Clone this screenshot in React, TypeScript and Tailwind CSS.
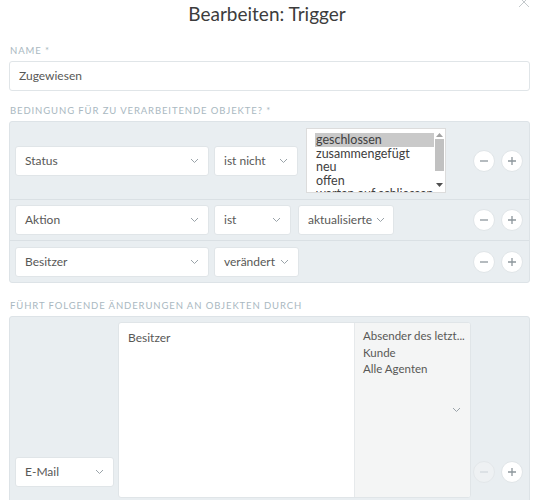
import type { ReactNode } from "react";

const FONT = "font-['Lato','Open_Sans',sans-serif]";

function Chevron({ className = "" }: { className?: string }) {
  return (
    <svg className={className} width="9" height="6" viewBox="0 0 9 6" fill="none">
      <path d="M1 1l3.5 3.5L8 1" stroke="#9aa3a9" strokeWidth="1" />
    </svg>
  );
}

function Label({ children }: { children: ReactNode }) {
  return (
    <div className="text-[9.5px] leading-[12px] tracking-[0.9px] uppercase text-[#a9b8c1]">
      {children}
    </div>
  );
}

function Select({ label, width }: { label: string; width: string }) {
  return (
    <div className={`${width} h-[30px] shrink-0 flex items-center justify-between pl-[9px] pr-[9px] bg-white border border-[#e0e5e8] rounded-[3px]`}>
      <span className="text-[12px] text-[#585856] whitespace-nowrap">{label}</span>
      <Chevron className="shrink-0 ml-[4px]" />
    </div>
  );
}

function RoundButton({ children, disabled = false }: { children: ReactNode; disabled?: boolean }) {
  return (
    <div
      className={
        disabled
          ? "w-[22px] h-[22px] rounded-full border border-[#e3e7ea] bg-[#eef1f3] flex items-center justify-center"
          : "w-[22px] h-[22px] rounded-full border border-[#e0e5e8] bg-white flex items-center justify-center"
      }
    >
      {children}
    </div>
  );
}

function Controls({ disabledMinus = false }: { disabledMinus?: boolean }) {
  const color = disabledMinus ? "#d3d9dd" : "#8d969c";
  return (
    <div className="ml-auto flex gap-[6px] shrink-0">
      <RoundButton disabled={disabledMinus}>
        <svg width="10" height="10" viewBox="0 0 10 10">
          <path d="M1 5h8" stroke={color} strokeWidth="1.3" />
        </svg>
      </RoundButton>
      <RoundButton>
        <svg width="10" height="10" viewBox="0 0 10 10">
          <path d="M1 5h8M5 1v8" stroke="#8d969c" strokeWidth="1.3" />
        </svg>
      </RoundButton>
    </div>
  );
}

function StateList() {
  const items = ["geschlossen", "zusammengefügt", "neu", "offen", "warten auf schliessen"];
  return (
    <div className="ml-[8px] w-[140px] h-[65px] bg-white border border-[#dcdcdc] flex overflow-hidden">
      <div className="flex-1 pl-[8px] pt-[4px] overflow-hidden">
        {items.map((item, index) => (
          <div
            className={
              index === 0
                ? "h-[13.5px] leading-[13.5px] text-[12.5px] text-[#404040] bg-[#c9c9c9] whitespace-nowrap pl-[1px]"
                : "h-[13.5px] leading-[13.5px] text-[12.5px] text-[#404040] whitespace-nowrap pl-[1px]"
            }
            key={item}
          >
            {item}
          </div>
        ))}
      </div>
      <div className="w-[11px] flex flex-col items-center bg-white">
        <svg className="mt-[3px]" width="7" height="5" viewBox="0 0 7 5">
          <path d="M0 5L3.5 1 7 5z" fill="#a3a3a3" />
        </svg>
        <div className="mt-[2px] w-[9px] h-[32px] bg-[#c1c1c1]" />
        <svg className="mt-auto mb-[4px]" width="7" height="5" viewBox="0 0 7 5">
          <path d="M0 0L3.5 4 7 0z" fill="#505050" />
        </svg>
      </div>
    </div>
  );
}

export default function App() {
  return (
    <div className={`${FONT} relative w-[534px] h-[500px] overflow-hidden bg-white text-[#585856]`}>
      <div className="h-[28px] flex items-center justify-center text-[19px] text-[#3c3c3c]">
        Bearbeiten: Trigger
      </div>
      <svg className="absolute right-[4px] top-[-4px]" width="12" height="12" viewBox="0 0 12 12">
        <path d="M1 1l10 10M11 1L1 11" stroke="#c4c9cc" strokeWidth="1" />
      </svg>

      <div className="pl-[9px] pr-[4px]">
        <div className="mt-[17px] pl-[1px]">
          <Label>Name *</Label>
        </div>
        <div className="mt-[4px] h-[30px] flex items-center pl-[9px] border border-[#e0e5e8] rounded-[3px] text-[12px]">
          Zugewiesen
        </div>

        <div className="mt-[14px] pl-[1px]">
          <Label>Bedingung für zu verarbeitende Objekte? *</Label>
        </div>
        <div className="mt-[4px] bg-[#e9eef1] border border-[#dde3e7] rounded-[3px]">
          <div className="h-[78px] flex items-center pl-[5px] pr-[6px] border-b border-[#dae0e4]">
            <Select label="Status" width="w-[194px]" />
            <div className="ml-[5px]">
              <Select label="ist nicht" width="w-[84px]" />
            </div>
            <StateList />
            <Controls />
          </div>
          <div className="h-[41px] flex items-center pl-[5px] pr-[6px] border-b border-[#dae0e4]">
            <Select label="Aktion" width="w-[194px]" />
            <div className="ml-[5px]">
              <Select label="ist" width="w-[77px]" />
            </div>
            <div className="ml-[7px]">
              <Select label="aktualisierte" width="w-[96px]" />
            </div>
            <Controls />
          </div>
          <div className="h-[41px] flex items-center pl-[5px] pr-[6px]">
            <Select label="Besitzer" width="w-[194px]" />
            <div className="ml-[5px]">
              <Select label="verändert" width="w-[85px]" />
            </div>
            <Controls />
          </div>
        </div>

        <div className="mt-[17px] pl-[1px]">
          <Label>Führt folgende Änderungen an Objekten durch</Label>
        </div>
        <div className="mt-[4px] bg-[#e9eef1] border border-[#dde3e7] rounded-[3px] pt-[5px] pl-[5px] pr-[6px]">
          <div className="flex items-center">
            <Select label="E-Mail" width="w-[99px]" />
            <div className="ml-[4px] w-[353px] flex flex-col gap-[2px]">
              <div className="h-[176px] flex bg-white border border-[#e0e5e8] rounded-[3px] overflow-hidden">
                <div className="flex-1 pl-[9px] pt-[6px] text-[12px]">Besitzer</div>
                <div className="relative w-[116px] bg-[#f4f5f5] border-l border-[#e6e9eb]">
                  <div className="pl-[8px] pt-[5px] text-[11.5px] leading-[16.5px] whitespace-nowrap">
                    <div>Absender des letzt...</div>
                    <div>Kunde</div>
                    <div>Alle Agenten</div>
                  </div>
                  <Chevron className="absolute right-[9px] top-[84px]" />
                </div>
              </div>
              <div className="h-[122px] bg-white border border-[#e0e5e8] rounded-[3px]" />
            </div>
            <Controls disabledMinus />
          </div>
        </div>
      </div>
    </div>
  );
}
